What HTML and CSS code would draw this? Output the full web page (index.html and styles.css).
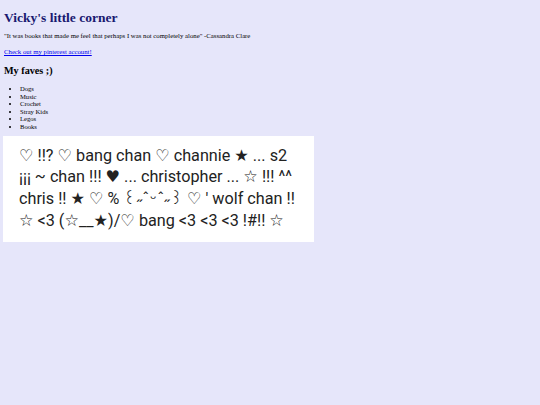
FILE: index.html
```html
<!DOCTYPE html>
<html>
<head>
<meta charset="utf-8">
<title>Vicky's little corner</title>
<link rel="stylesheet" href="styles.css">
</head>
<body>
<h1 class="title">Vicky's little corner</h1>
<p class="quote">"It was books that made me feel that perhaps I was not completely alone" -Cassandra Clare</p>
<p class="link-line"><a href="#">Check out my pinterest account!</a></p>
<h2 class="faves">My faves ;)</h2>
<ul class="faves-list">
<li>Dogs</li>
<li>Music</li>
<li>Crochet</li>
<li>Stray Kids</li>
<li>Legos</li>
<li>Books</li>
</ul>
<div class="box">♡ !!? ♡ bang chan ♡ channie ★ ... s2 ¡¡¡ ~ chan !!! ♥ ... christopher ... ☆ !!! ^^ chris !! ★ ♡ % <span class="kao">꒰ ˶ˆ ᵕ ˆ˶ ꒱</span> ♡ ' wolf chan !! ☆ &lt;3 (☆__★)/♡ bang &lt;3 &lt;3 &lt;3 !#!! ☆</div>
</body>
</html>
```
FILE: styles.css
```css
html { background: #e6e6fa; }
body {
  margin: 0;
  padding: 4px;
  font-family: "Liberation Serif", serif;
  color: #000;
  background: #e6e6fa;
}
.title {
  font-size: 13.5px;
  font-weight: bold;
  color: #191970;
  margin: 5px 0 0 0;
  line-height: 17px;
}
.quote {
  font-size: 6.75px;
  margin: 6px 0 0 0;
  line-height: 8px;
}
.link-line {
  font-size: 6.75px;
  margin: 8px 0 0 0;
  line-height: 8px;
}
.link-line a { color: #0000ee; }
.faves {
  font-size: 10.2px;
  font-weight: bold;
  margin: 8px 0 0 0;
  line-height: 13px;
}
.faves-list {
  font-size: 6.6px;
  line-height: 7.6px;
  margin: 8px 0 0 0;
  padding-left: 16px;
}
.box {
  margin: 5px 0 0 -1px;
  width: 279px;
  padding: 9px 16px 11px 16px;
  background: #fff;
  font-family: Roboto, "DejaVu Sans", "Noto Sans CJK SC", sans-serif;
  font-size: 16.2px;
  line-height: 21.7px;
  color: #222;
}
.kao {
  letter-spacing: -0.3px;
  word-spacing: -3px;
}
```
